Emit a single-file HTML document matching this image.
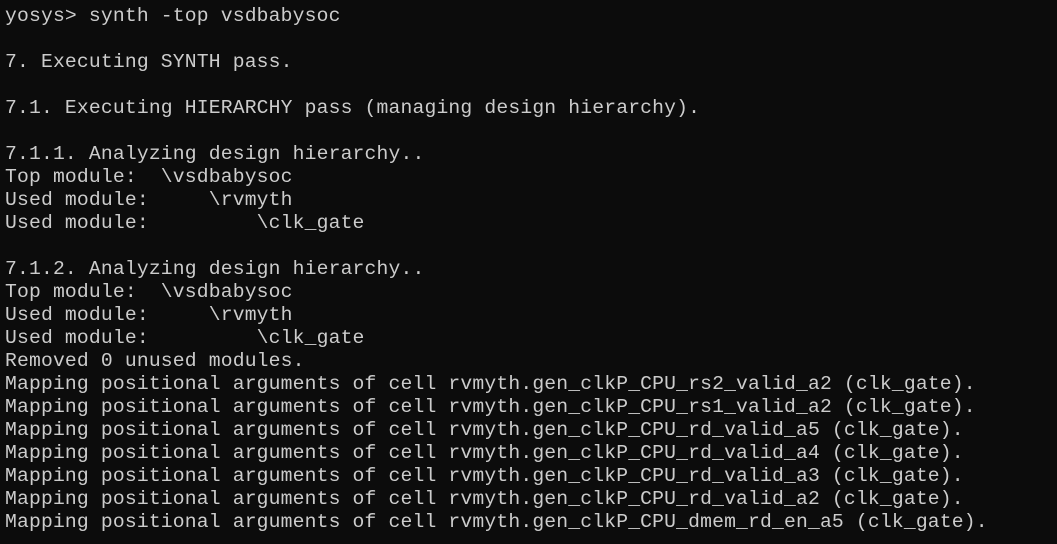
<!DOCTYPE html>
<html><head><meta charset="utf-8"><style>
html,body{margin:0;padding:0;background:#0c0c0c;width:1057px;height:544px;overflow:hidden}
pre{margin:0;position:absolute;left:5px;top:5px;font-family:"Liberation Mono",monospace;font-size:19.7px;letter-spacing:0.17px;line-height:23px;color:#cccccc;white-space:pre}
</style></head><body><pre>yosys&gt; synth -top vsdbabysoc

7. Executing SYNTH pass.

7.1. Executing HIERARCHY pass (managing design hierarchy).

7.1.1. Analyzing design hierarchy..
Top module:  \vsdbabysoc
Used module:     \rvmyth
Used module:         \clk_gate

7.1.2. Analyzing design hierarchy..
Top module:  \vsdbabysoc
Used module:     \rvmyth
Used module:         \clk_gate
Removed 0 unused modules.
Mapping positional arguments of cell rvmyth.gen_clkP_CPU_rs2_valid_a2 (clk_gate).
Mapping positional arguments of cell rvmyth.gen_clkP_CPU_rs1_valid_a2 (clk_gate).
Mapping positional arguments of cell rvmyth.gen_clkP_CPU_rd_valid_a5 (clk_gate).
Mapping positional arguments of cell rvmyth.gen_clkP_CPU_rd_valid_a4 (clk_gate).
Mapping positional arguments of cell rvmyth.gen_clkP_CPU_rd_valid_a3 (clk_gate).
Mapping positional arguments of cell rvmyth.gen_clkP_CPU_rd_valid_a2 (clk_gate).
Mapping positional arguments of cell rvmyth.gen_clkP_CPU_dmem_rd_en_a5 (clk_gate).</pre></body></html>
